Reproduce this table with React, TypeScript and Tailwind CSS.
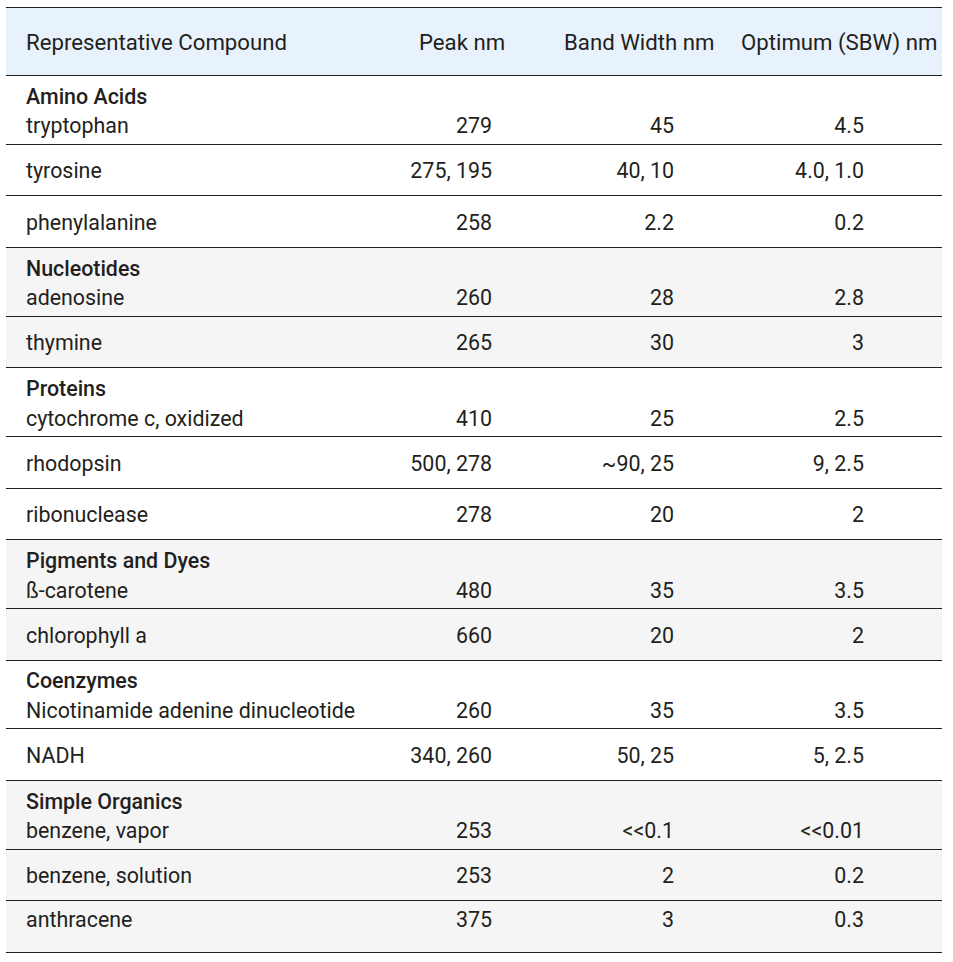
const groups = [
  {
    name: "Amino Acids",
    shaded: false,
    rows: [
      ["tryptophan", "279", "45", "4.5"],
      ["tyrosine", "275, 195", "40, 10", "4.0, 1.0"],
      ["phenylalanine", "258", "2.2", "0.2"],
    ],
  },
  {
    name: "Nucleotides",
    shaded: true,
    rows: [
      ["adenosine", "260", "28", "2.8"],
      ["thymine", "265", "30", "3"],
    ],
  },
  {
    name: "Proteins",
    shaded: false,
    rows: [
      ["cytochrome c, oxidized", "410", "25", "2.5"],
      ["rhodopsin", "500, 278", "~90, 25", "9, 2.5"],
      ["ribonuclease", "278", "20", "2"],
    ],
  },
  {
    name: "Pigments and Dyes",
    shaded: true,
    rows: [
      ["ß-carotene", "480", "35", "3.5"],
      ["chlorophyll a", "660", "20", "2"],
    ],
  },
  {
    name: "Coenzymes",
    shaded: false,
    rows: [
      ["Nicotinamide adenine dinucleotide", "260", "35", "3.5"],
      ["NADH", "340, 260", "50, 25", "5, 2.5"],
    ],
  },
  {
    name: "Simple Organics",
    shaded: true,
    rows: [
      ["benzene, vapor", "253", "<<0.1", "<<0.01"],
      ["benzene, solution", "253", "2", "0.2"],
      ["anthracene", "375", "3", "0.3"],
    ],
  },
];

const Row = ({
  cells,
  label,
  shaded,
  last,
}: {
  cells: string[];
  label?: string;
  shaded: boolean;
  last?: boolean;
}) => (
  <div
    className={`grid grid-cols-[393px_145px_177px_221px] items-end border-b border-[#231f20] ${
      shaded ? "bg-[#f5f5f5]" : "bg-white"
    } ${
      label
        ? "h-[68.5px] pb-[2.8px]"
        : last
        ? "h-[51.8px] pb-[17.6px]"
        : "h-[51.8px] pb-[9.6px]"
    }`}
  >
    <div className="pl-5">
      {label && <div className="font-medium">{label}</div>}
      <div>{cells[0]}</div>
    </div>
    <div className="text-right pr-[52px]">{cells[1]}</div>
    <div className="text-right pr-[47px]">{cells[2]}</div>
    <div className="text-right pr-[78px]">{cells[3]}</div>
  </div>
);

export default function App() {
  return (
    <div className="bg-white min-h-screen pt-[7px] pl-[6px] font-['Roboto',sans-serif] text-[21.4px] leading-[29.5px] text-[#231f20]">
      <div className="w-[936px] border-t border-[#231f20]">
        <div className="grid grid-cols-[393px_145px_177px_221px] h-[68px] bg-[#e8f2fc] border-b border-[#231f20] pt-[19px] text-[22.2px] leading-[30px]">
          <div className="pl-5">Representative Compound</div>
          <div className="pl-5">Peak nm</div>
          <div className="pl-5">Band Width nm</div>
          <div className="pl-5 whitespace-nowrap">Optimum (SBW) nm</div>
        </div>
        {groups.map((g, gi) =>
          g.rows.map((r, i) => (
            <Row
              key={g.name + r[0]}
              cells={r}
              label={i === 0 ? g.name : undefined}
              shaded={g.shaded}
              last={gi === groups.length - 1 && i === g.rows.length - 1}
            />
          ))
        )}
      </div>
    </div>
  );
}
